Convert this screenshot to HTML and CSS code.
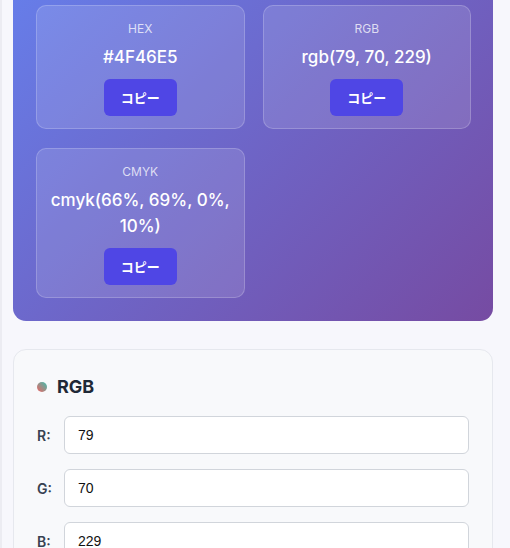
FILE: index.html
```html
<!DOCTYPE html>
<html lang="ja">
<head>
<meta charset="utf-8">
<link rel="stylesheet" href="styles.css">
</head>
<body>
<main class="page">
  <section class="preview">
    <div class="formats">
      <div class="fmt">
        <div class="fmt-label">HEX</div>
        <div class="fmt-value">#4F46E5</div>
        <button class="copy">コピー</button>
      </div>
      <div class="fmt">
        <div class="fmt-label">RGB</div>
        <div class="fmt-value">rgb(79, 70, 229)</div>
        <button class="copy">コピー</button>
      </div>
      <div class="fmt">
        <div class="fmt-label">CMYK</div>
        <div class="fmt-value">cmyk(66%, 69%, 0%, 10%)</div>
        <button class="copy">コピー</button>
      </div>
    </div>
  </section>

  <section class="panel">
    <h2 class="panel-title"><span class="dot"></span>RGB</h2>
    <div class="field"><label class="field-label">R:</label><input class="field-input" type="text" value="79"></div>
    <div class="field"><label class="field-label">G:</label><input class="field-input" type="text" value="70"></div>
    <div class="field"><label class="field-label">B:</label><input class="field-input" type="text" value="229"></div>
  </section>
</main>
</body>
</html>
```

FILE: styles.css
```css
html, body {
  margin: 0;
  padding: 0;
  background: #f7f7fc;
  overflow: hidden;
}
body {
  font-family: "Noto Sans", "Noto Sans CJK JP", sans-serif;
  border-left: 2px solid #ececf2;
}
.page {
  padding: 0 17px 0 11px;
  display: flex;
  flex-direction: column;
  gap: 28px;
}
.preview {
  margin-top: -18px;
  background: linear-gradient(135deg, #667eea 0%, #764ba2 100%);
  border-radius: 13px;
  padding: 23px 22px 23px 23px;
}
.formats {
  display: grid;
  grid-template-columns: 1fr 1fr;
  column-gap: 18px;
  row-gap: 19px;
}
.fmt {
  background: rgba(255,255,255,0.12);
  border: 1px solid rgba(255,255,255,0.2);
  border-radius: 10px;
  padding: 15px 12px 12px;
  display: flex;
  flex-direction: column;
  align-items: center;
  text-align: center;
}
.fmt-label {
  font-family: "Inter", sans-serif;
  font-size: 12px;
  line-height: 16px;
  color: rgba(255,255,255,0.75);
}
.fmt-value {
  margin-top: 7px;
  font-family: "Inter", "Noto Sans", sans-serif;
  font-size: 17px;
  line-height: 26px;
  font-weight: 500;
  color: #fff;
}
.copy {
  margin-top: 9px;
  width: 73px;
  height: 37px;
  border: none;
  border-radius: 6px;
  background: #4f46e5;
  color: #fff;
  font-family: "Noto Sans CJK JP", sans-serif;
  font-size: 13px;
  font-weight: 700;
  padding: 0;
}
.panel {
  background: #f8f9fb;
  border: 1px solid #e6e8ee;
  border-radius: 13px;
  padding: 23px 23px 40px;
}
.panel-title {
  margin: 0 0 15px;
  display: flex;
  align-items: center;
  gap: 10px;
  font-family: "Inter", sans-serif;
  font-size: 18px;
  line-height: 28px;
  font-weight: 700;
  color: #1f2937;
}
.dot {
  width: 10px;
  height: 10px;
  border-radius: 50%;
  background: linear-gradient(45deg, #f06262 0%, #3fbfae 100%);
}
.field {
  display: flex;
  align-items: center;
  gap: 10px;
  margin-bottom: 15px;
}
.field-label {
  width: 17px;
  font-family: "Inter", sans-serif;
  font-size: 14px;
  font-weight: 600;
  color: #374151;
}
.field-input {
  flex: 1;
  height: 38px;
  box-sizing: border-box;
  border: 1px solid #d1d5db;
  border-radius: 6px;
  background: #fff;
  padding: 0 13px;
  font-family: "Liberation Sans", sans-serif;
  font-size: 14px;
  color: #111;
}
```
